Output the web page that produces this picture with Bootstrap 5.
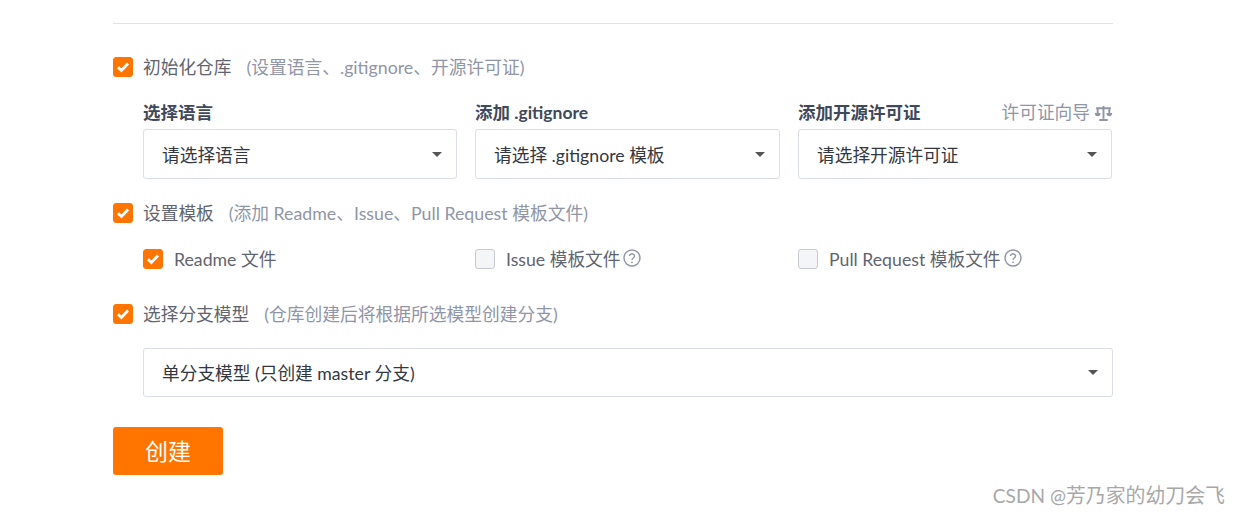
<!DOCTYPE html>
<html lang="zh-CN">

<head>
  <meta charset="UTF-8">
  <title>新建仓库</title>
  <link href="https://cdn.jsdelivr.net/npm/bootstrap@5.3.0/dist/css/bootstrap.min.css" rel="stylesheet">
  <style>
    html, body { height: 514px; overflow: hidden; }

    body {
      background: #fff;
      color: #40485b;
      font-family: Lato, "Noto Sans CJK SC", sans-serif;
      font-size: 17.7px;
    }

    .form-wrap { width: 1000px; margin-left: 113px; padding-top: 23px; }
    .top-rule { height: 1px; background: #e3e3e6; margin-bottom: 33px; }

    .opt-row { height: 20px; line-height: 20px; white-space: nowrap; }
    .opt-box {
      width: 20px; height: 20px; border-radius: 3px; flex: none;
      background: #ff7500; border: 1px solid #ff7500;
      display: flex; align-items: center; justify-content: center;
    }
    .opt-box.off {
      background: #f4f5f7; border-color: #c8cad2;
    }
    .opt-label { color: #5f6470; margin-left: 10px; position: relative; top: 1px; }
    .tpl-grid .opt-label { margin-left: 11px; }
    .opt-hint { color: #9095a8; margin-left: 15px; font-size: 17.75px; }

    .pick-grid { display: grid; grid-template-columns: 314px 305px 314px; column-gap: 18px; margin-left: 30px; }
    .lang-grid { margin-top: 23px; }
    .pick-head { height: 29px; line-height: 26px; font-weight: 700; color: #40485b; font-size: 17.5px; }
    .guide-link { color: #9095a8; font-weight: 400; font-size: 17.7px; margin-right: -1px; height: 26px; }
    .pick-box {
      height: 50px; border: 1px solid #dcdee6; border-radius: 3px; background: #fff;
      padding: 0 14px 0 18px; color: #33373f;
    }
    .pick-box > span:first-child { position: relative; top: 2px; }
    .pick-caret { width: 0; height: 0; border: 5px solid transparent; border-top: 5px solid #555; border-bottom: 0; }

    .sec-template { margin-top: 24px; }
    .tpl-grid { margin-top: 26px; }
    .help-ico { margin-left: 3px; margin-top: -3px; flex: none; }
    .sec-branch { margin-top: 35px; }
    .branch-box { margin: 24px 0 0 30px; height: 49px; }

    .make-btn {
      display: block; width: 110px; height: 48px; margin-top: 30px; padding: 0;
      background: #ff7500; border: 0; border-radius: 3px; color: #fff; font-size: 23px;
    }

    .mark-text {
      position: absolute; right: 15px; top: 483px;
      color: #a8a8a8; font-size: 19.9px; line-height: 24px; white-space: nowrap;
    }
    .mark-latin { font-size: 19.1px; }
  </style>
</head>

<body>
  <form class="form-wrap">
    <div class="top-rule"></div>

    <div class="opt-row d-flex align-items-center">
      <span class="opt-box"><svg width="14" height="12" viewBox="0 0 14 12"><path d="M2 6.2 5.4 9.5 12 2.5" fill="none" stroke="#fff" stroke-width="2.8"/></svg></span>
      <span class="opt-label">初始化仓库</span>
      <span class="opt-hint">(设置语言、.gitignore、开源许可证)</span>
    </div>

    <div class="pick-grid lang-grid">
      <div>
        <div class="pick-head">选择语言</div>
        <div class="pick-box d-flex align-items-center justify-content-between"><span>请选择语言</span><span class="pick-caret"></span></div>
      </div>
      <div>
        <div class="pick-head">添加 .gitignore</div>
        <div class="pick-box d-flex align-items-center justify-content-between"><span>请选择 .gitignore 模板</span><span class="pick-caret"></span></div>
      </div>
      <div>
        <div class="pick-head d-flex justify-content-between">
          <span>添加开源许可证</span>
          <span class="guide-link d-flex align-items-center">许可证向导
            <svg class="ms-1" width="19" height="17" viewBox="0 0 18 16"><path d="M9 1v12M5 14.200h8M2 3h14M3.500 3v5.500M14.500 3v5.500" fill="none" stroke="#9095a8" stroke-width="1.800"/><path d="M.8 7.500h5.400a2.700 3 0 0 1-5.400 0zM11.800 7.500h5.400a2.700 3 0 0 1-5.400 0z" fill="#9095a8"/></svg>
          </span>
        </div>
        <div class="pick-box d-flex align-items-center justify-content-between"><span>请选择开源许可证</span><span class="pick-caret"></span></div>
      </div>
    </div>

    <div class="opt-row sec-template d-flex align-items-center">
      <span class="opt-box"><svg width="14" height="12" viewBox="0 0 14 12"><path d="M2 6.2 5.4 9.5 12 2.5" fill="none" stroke="#fff" stroke-width="2.8"/></svg></span>
      <span class="opt-label">设置模板</span>
      <span class="opt-hint">(添加 Readme、Issue、Pull Request 模板文件)</span>
    </div>

    <div class="pick-grid tpl-grid">
      <div class="opt-row d-flex align-items-center">
        <span class="opt-box"><svg width="14" height="12" viewBox="0 0 14 12"><path d="M2 6.2 5.4 9.5 12 2.5" fill="none" stroke="#fff" stroke-width="2.8"/></svg></span>
        <span class="opt-label">Readme 文件</span>
      </div>
      <div class="opt-row d-flex align-items-center">
        <span class="opt-box off"></span>
        <span class="opt-label">Issue 模板文件</span>
        <svg class="help-ico" width="18" height="18" viewBox="0 0 18 18"><circle cx="9" cy="9" r="8" fill="none" stroke="#9095a8" stroke-width="1.400"/><path d="M6.500 7a2.500 2.300 0 1 1 3.800 2c-.9.6-1.300 1-1.300 2" fill="none" stroke="#9095a8" stroke-width="1.400"/><circle cx="9" cy="13.300" r=".9" fill="#9095a8"/></svg>
      </div>
      <div class="opt-row d-flex align-items-center">
        <span class="opt-box off"></span>
        <span class="opt-label">Pull Request 模板文件</span>
        <svg class="help-ico" width="18" height="18" viewBox="0 0 18 18"><circle cx="9" cy="9" r="8" fill="none" stroke="#9095a8" stroke-width="1.400"/><path d="M6.500 7a2.500 2.300 0 1 1 3.800 2c-.9.6-1.300 1-1.300 2" fill="none" stroke="#9095a8" stroke-width="1.400"/><circle cx="9" cy="13.300" r=".9" fill="#9095a8"/></svg>
      </div>
    </div>

    <div class="opt-row sec-branch d-flex align-items-center">
      <span class="opt-box"><svg width="14" height="12" viewBox="0 0 14 12"><path d="M2 6.2 5.4 9.5 12 2.5" fill="none" stroke="#fff" stroke-width="2.8"/></svg></span>
      <span class="opt-label">选择分支模型</span>
      <span class="opt-hint">(仓库创建后将根据所选模型创建分支)</span>
    </div>

    <div class="pick-box branch-box d-flex align-items-center justify-content-between"><span>单分支模型 (只创建 master 分支)</span><span class="pick-caret"></span></div>

    <button type="button" class="btn make-btn">创建</button>
  </form>

  <div class="mark-text"><span class="mark-latin">CSDN @</span>芳乃家的幼刀会飞</div>

  <script src="https://cdn.jsdelivr.net/npm/bootstrap@5.3.0/dist/js/bootstrap.bundle.min.js"></script>
</body>

</html>
